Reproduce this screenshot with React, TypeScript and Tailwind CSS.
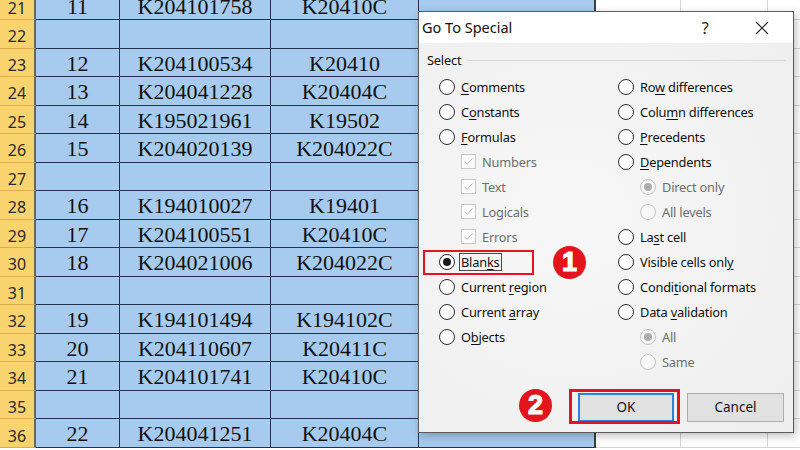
import React from 'react';
import clsx from 'clsx';

type Row = { n: number; a?: string; b?: string; c?: string };

const ROWS: Row[] = [
  { n: 21, a: '11', b: 'K204101758', c: 'K20410C' },
  { n: 22 },
  { n: 23, a: '12', b: 'K204100534', c: 'K20410' },
  { n: 24, a: '13', b: 'K204041228', c: 'K20404C' },
  { n: 25, a: '14', b: 'K195021961', c: 'K19502' },
  { n: 26, a: '15', b: 'K204020139', c: 'K204022C' },
  { n: 27 },
  { n: 28, a: '16', b: 'K194010027', c: 'K19401' },
  { n: 29, a: '17', b: 'K204100551', c: 'K20410C' },
  { n: 30, a: '18', b: 'K204021006', c: 'K204022C' },
  { n: 31 },
  { n: 32, a: '19', b: 'K194101494', c: 'K194102C' },
  { n: 33, a: '20', b: 'K204110607', c: 'K20411C' },
  { n: 34, a: '21', b: 'K204101741', c: 'K20410C' },
  { n: 35 },
  { n: 36, a: '22', b: 'K204041251', c: 'K20404C' },
];

type Item = {
  label: string;
  kind: 'radio' | 'check' | 'subradio';
  checked?: boolean;
  focus?: boolean;
};

const LEFT: Item[] = [
  { label: '&Comments', kind: 'radio' },
  { label: 'C&onstants', kind: 'radio' },
  { label: '&Formulas', kind: 'radio' },
  { label: 'Numbers', kind: 'check' },
  { label: 'Text', kind: 'check' },
  { label: 'Logicals', kind: 'check' },
  { label: 'Errors', kind: 'check' },
  { label: 'Blan&ks', kind: 'radio', checked: true, focus: true },
  { label: 'Current &region', kind: 'radio' },
  { label: 'Current &array', kind: 'radio' },
  { label: 'O&bjects', kind: 'radio' },
];

const RIGHT: Item[] = [
  { label: 'Ro&w differences', kind: 'radio' },
  { label: 'Colu&mn differences', kind: 'radio' },
  { label: '&Precedents', kind: 'radio' },
  { label: '&Dependents', kind: 'radio' },
  { label: 'Direct only', kind: 'subradio', checked: true },
  { label: 'All levels', kind: 'subradio' },
  { label: 'La&st cell', kind: 'radio' },
  { label: 'Visible cells onl&y', kind: 'radio' },
  { label: 'Condi&tional formats', kind: 'radio' },
  { label: 'Data &validation', kind: 'radio' },
  { label: 'All', kind: 'subradio', checked: true },
  { label: 'Same', kind: 'subradio' },
];

// "&" marks the accelerator letter
const Label = ({ text }: { text: string }) => {
  const i = text.indexOf('&');
  if (i < 0) return <>{text}</>;
  return (
    <>
      {text.slice(0, i)}
      <span className="underline underline-offset-2 decoration-1">{text[i + 1]}</span>
      {text.slice(i + 2)}
    </>
  );
};

const Option = ({ item }: { item: Item }) => {
  const disabled = item.kind !== 'radio';
  return (
    <div className={clsx('h-[25px] flex items-center gap-[6px]', disabled && 'pl-[22px]')}>
      {item.kind === 'check' ? (
        <span className="w-[15px] h-[15px] border border-[#c8c8c8] bg-[#fbfbfb] flex items-center justify-center shrink-0">
          <svg width="11" height="11" viewBox="0 0 11 11">
            <path d="M1.5 5.8 L4.2 8.3 L9.5 2.5" fill="none" stroke="#b4b4b4" strokeWidth="1" />
          </svg>
        </span>
      ) : (
        <span
          className={clsx(
            'w-4 h-4 rounded-full border flex items-center justify-center shrink-0',
            disabled ? 'border-[#c4c4c4] bg-[#f8f8f8]' : 'border-[#2b2b2b] bg-white'
          )}
        >
          {item.checked && (
            <span className={clsx('w-[8px] h-[8px] rounded-full', disabled ? 'bg-[#adadad]' : 'bg-[#1a1a1a]')} />
          )}
        </span>
      )}
      <span
        className={clsx(
          'leading-[16px] whitespace-nowrap',
          disabled ? 'text-[#6e6e6e]' : 'text-[#111]',
          item.focus && 'border border-[#4a4a4a] px-[1px] -ml-[2px]'
        )}
      >
        <Label text={item.label} />
      </span>
    </div>
  );
};

const SheetRow = ({ row, first }: { row: Row; first?: boolean }) => (
  <div className={clsx('flex h-[28.53px] shrink-0', first && '-mt-[8.5px]')}>
    <div className="w-[36px] shrink-0 bg-[#f9d36e] border-b border-b-[#dcae4c] border-r-2 border-r-[#6f6754] flex items-center justify-center pt-[5px] text-[16px] text-[#2a2a2a] font-['Noto_Sans',sans-serif]">
      {row.n}
    </div>
    {[
      { w: 'w-[84px]', t: row.a },
      { w: 'w-[151px]', t: row.b },
      { w: 'w-[148px]', t: row.c },
    ].map((c, i) => (
      <div
        key={i}
        className={clsx(
          c.w,
          'shrink-0 bg-[#a6cbee] border-b border-r border-[#22324d] flex items-center justify-center pt-[3px] leading-none text-[22px] text-[#111] font-["Liberation_Serif",serif]'
        )}
      >
        {c.t}
      </div>
    ))}
    <div className="w-[177px] shrink-0 bg-[#a6cbee] border-b border-b-[#22324d] border-r-2 border-r-[#3e3e3e]" />
    <div className="w-[85px] shrink-0 bg-white border-b border-r border-[#d6d6d6]" />
    <div className="w-[87px] shrink-0 bg-white border-b border-r border-[#d6d6d6]" />
    <div className="flex-1 bg-white border-b border-[#d6d6d6]" />
  </div>
);

const Badge = ({ n, className }: { n: string; className: string }) => (
  <div
    className={clsx(
      'absolute w-[33px] h-[33px] rounded-full bg-[#e3141b] flex items-center justify-center text-white font-bold text-[27px] leading-none font-["Liberation_Sans",sans-serif] [-webkit-text-stroke:1.2px_white]',
      className
    )}
  >
    {n}
  </div>
);

export default function App() {
  return (
    <div className="relative w-[800px] h-[450px] overflow-hidden bg-white">
      {/* spreadsheet */}
      <div className="flex flex-col">
        {ROWS.map((r, i) => (
          <SheetRow key={r.n} row={r} first={i === 0} />
        ))}
      </div>

      {/* Go To Special dialog */}
      <div className="absolute left-[418px] top-[11px] w-[376px] h-[422px] border border-[#5c5c5c] bg-[#f0f0f0] shadow-[2px_3px_8px_rgba(0,0,0,0.25)] flex flex-col font-['Noto_Sans',sans-serif] text-[12.8px] tracking-[-0.2px]">
        <div className="h-[31px] bg-white flex items-center pl-[3px] shrink-0">
          <span className="text-[14.5px] tracking-normal text-[#111]">Go To Special</span>
          <span className="ml-auto w-[20px] text-center text-[16px] text-[#222] mr-[39px]">?</span>
          <svg width="16" height="16" viewBox="0 0 16 16" className="mr-[23px]">
            <path d="M2 2 L14 14 M14 2 L2 14" stroke="#222" strokeWidth="1.1" />
          </svg>
        </div>
        <div className="flex-1 bg-[radial-gradient(ellipse_at_40%_45%,#f7f7f7,#eeeeee)] pt-[8px] flex flex-col">
          <div className="h-[18px] flex items-center pl-[8px] pr-[7px] gap-[6px]">
            <span className="text-[#111] leading-none">Select</span>
            <div className="flex-1 h-px bg-[#dadada]" />
          </div>
          <div className="mt-[5px] flex pl-[20px]">
            <div className="w-[179px] flex flex-col">
              {LEFT.map((it) => (
                <Option key={it.label} item={it} />
              ))}
            </div>
            <div className="flex flex-col">
              {RIGHT.map((it) => (
                <Option key={it.label} item={it} />
              ))}
            </div>
          </div>
          <div className="mt-[19px] flex justify-end gap-[13px] pr-[9px] text-[13.5px] tracking-normal">
            <button className="w-[96px] h-[29px] bg-[#e1e1e1] border-2 border-[#2f7fdc] text-[#111]">OK</button>
            <button className="w-[97px] h-[29px] bg-[#e1e1e1] border border-[#adadad] text-[#111]">Cancel</button>
          </div>
        </div>
      </div>

      {/* annotations */}
      <div className="absolute left-[423px] top-[250px] w-[111px] h-[25px] border-2 border-[#e3141b]" />
      <Badge n="1" className="left-[553px] top-[246px]" />
      <div className="absolute left-[569px] top-[389px] w-[111px] h-[35px] border-[3px] border-[#e3141b]" />
      <Badge n="2" className="left-[519px] top-[389px]" />
    </div>
  );
}
